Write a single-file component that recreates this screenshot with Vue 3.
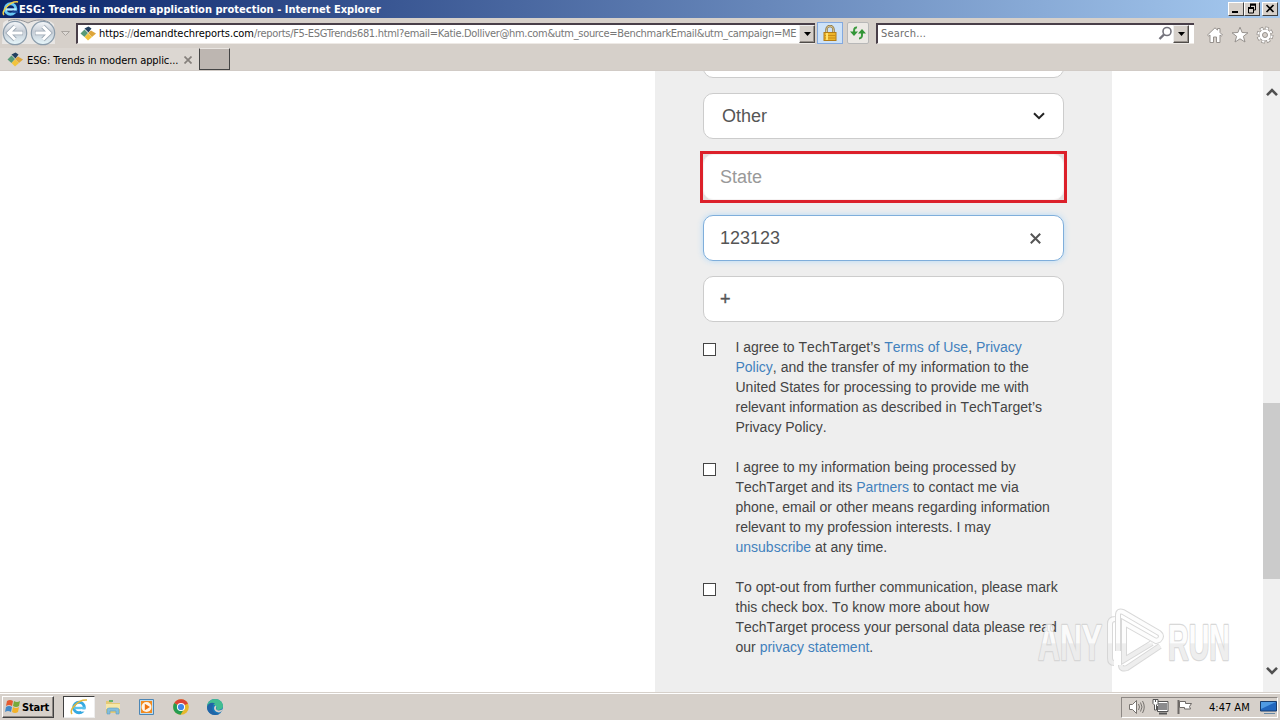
<script setup>
import { ref } from 'vue';

const country = ref('Other');
const zip = ref('123123');
const phone = ref('+');
const pageTitle = 'ESG: Trends in modern application';
</script>

<template>
    <div class="desktop">
        <header class="title-bar">
            <svg class="title-icon" width="17" height="17" viewBox="0 0 18 18">
                <circle cx="9" cy="9.5" r="5.6" fill="none" stroke="#67c8f5" stroke-width="3.2" />
                <path d="M4 10h11" stroke="#b9ecff" stroke-width="2.4" />
                <path d="M11 12.4h6" stroke="#1d4594" stroke-width="2.4" />
                <path d="M2 16C-1 12 8 1 17 2" fill="none" stroke="#f3cf45" stroke-width="1.6" />
            </svg>
            <span class="title-text">{{ pageTitle }} protection - Internet Explorer</span>
            <div class="window-buttons">
                <button class="win-btn">
                    <svg width="14" height="12"><path d="M3 9h6" stroke="#000" stroke-width="2" /></svg>
                </button>
                <button class="win-btn">
                    <svg width="14" height="12" fill="none" stroke="#000">
                        <path d="M5 2h6M5.500 2v2M10.500 2v5H9M3 5.500h6M3.500 5v5h5V5" /><path d="M5 1.500h6M3 5h6" stroke-width="2" />
                    </svg>
                </button>
                <button class="win-btn win-btn--close">
                    <svg width="14" height="12"><path d="M3.500 2l7 7M10.500 2l-7 7" stroke="#000" stroke-width="1.700" /></svg>
                </button>
            </div>
        </header>

        <div class="nav-bar">
            <svg class="history" width="74" height="30" viewBox="0 0 74 30">
                <defs>
                    <linearGradient id="orb" x1="0" y1="0" x2="0" y2="1">
                        <stop offset="0" stop-color="#f7f9fb" />
                        <stop offset=".45" stop-color="#c5ccd5" />
                        <stop offset="1" stop-color="#e8f8fc" />
                    </linearGradient>
                </defs>
                <path d="M3 5C7 0 20 1 28 5c7-4 20-5 26 1l1 20H2z" fill="#e9e7e5" />
                <path d="M8 3c6-3 14-1 20 2 7-4 17-4 22 0" fill="none" stroke="#96979b" />
                <circle cx="15" cy="15" r="11.700" fill="url(#orb)" stroke="#8b9cab" stroke-width="1.200" />
                <circle cx="43" cy="15" r="11.700" fill="url(#orb)" stroke="#8b9cab" stroke-width="1.200" />
                <g fill="none" stroke="#9da9b5" stroke-width="4.600">
                    <path d="M23 15H9M15 8.500L8.500 15l6.500 6.500M35 15h14M43 8.500l6.500 6.500-6.500 6.500" />
                </g>
                <g fill="none" stroke="#fff" stroke-width="3">
                    <path d="M22.500 15H9M15 8.500L8.500 15l6.500 6.500M35.500 15h13.500M43 8.500l6.500 6.500-6.500 6.500" />
                </g>
                <path d="M61.500 13.500h8l-4 4z" fill="#dedad6" stroke="#aaa5a0" />
            </svg>
            <div class="address">
                <svg class="favicon" width="16" height="16" viewBox="0 0 16 16">
                    <path d="M4.500 2.500l4-2 3 2-3 4z" fill="#23405f" /><path d="M4.500 3.500L8 7l-3.500 4L.5 7.500z" fill="#579a78" />
                    <path d="M11 4.500l5 3-4 3.500L8 7z" fill="#dda53b" /><path d="M8 7.500l4 3.500-4 3.500L4.500 11z" fill="#f1c43c" />
                </svg>
                <span class="url"><b>https</b>://<b>demandtechreports.com</b>/reports/F5-ESGTrends681.html?email=Katie.Dolliver@hm.com&amp;utm_source=BenchmarkEmail&amp;utm_campaign=ME</span>
                <button class="drop-btn"><svg width="7" height="4"><path d="M0 0h7L3.500 4z" /></svg></button>
            </div>
            <button class="lock-btn">
                <svg width="14" height="17" viewBox="0 0 14 17">
                    <path d="M3.500 8V4.500a3.500 3.500 0 0 1 7 0V8" fill="none" stroke="#8b7340" stroke-width="2.400" />
                    <path d="M3.500 8V4.500a3.500 3.500 0 0 1 7 0V8" fill="none" stroke="#e0cf9a" stroke-width=".9" />
                    <rect x="1" y="7.500" width="12" height="8" fill="#edb52b" stroke="#b27c17" />
                    <path d="M1.500 10.500h11M1.500 13h11" stroke="#ca8d17" />
                    <path d="M4 8v7" stroke="#ffe16d" stroke-width="2" />
                </svg>
            </button>
            <button class="refresh-btn">
                <svg width="16" height="16" viewBox="0 0 16 16">
                    <path d="M7 2.500C4 2 4 5 4 8M9 13.500c3.500 0 3-3 3-6" fill="none" stroke="#3b9a3e" stroke-width="2" />
                    <path d="M0 6.500h8L4 11zM8 8.500h8L12 4z" fill="#329537" />
                </svg>
            </button>
            <div class="search">
                <span class="search-text">Search...</span>
                <svg width="15" height="15" viewBox="0 0 15 15" fill="none" stroke="#74737c">
                    <circle cx="9" cy="5.500" r="4" stroke-width="1.600" /><path d="M6 8.500L1.500 13" stroke-width="2.400" />
                </svg>
                <button class="drop-btn"><svg width="7" height="4"><path d="M0 0h7L3.500 4z" /></svg></button>
            </div>
            <div class="tools">
                <svg width="18" height="18" viewBox="0 0 18 18" fill="#fff" stroke="#96918d">
                    <path d="M1.500 9L9 1.800l2.500 2.300V2.500h2.500v4L16.500 9l-1.200 1-1.300-1v7.500h-3.500V11h-3v5.500H4V9l-1.300 1z" />
                </svg>
                <svg width="18" height="18" viewBox="0 0 18 18" fill="#fff" stroke="#96918d">
                    <path d="M9 1.200l2.100 5.300 5.900.3-4.600 3.500 1.600 5.700L9 12.800 4 16l1.600-5.700L1 6.800l5.900-.3z" />
                </svg>
                <svg width="18" height="18" viewBox="0 0 18 18">
                    <circle cx="9" cy="9" r="6.700" fill="none" stroke="#96918d" stroke-width="3.600" stroke-dasharray="3.400 1.860" />
                    <circle cx="9" cy="9" r="6" fill="#fff" stroke="#96918d" />
                    <circle cx="9" cy="9" r="6.700" fill="none" stroke="#fff" stroke-width="2" stroke-dasharray="2.400 2.860" stroke-dashoffset="-.5" />
                    <circle cx="9" cy="9" r="2.500" fill="#d6d0ca" stroke="#96918d" />
                </svg>
            </div>
        </div>

        <div class="tab-bar">
            <div class="tab">
                <svg class="favicon" width="16" height="16" viewBox="0 0 16 16">
                    <path d="M4.500 2.500l4-2 3 2-3 4z" fill="#23405f" /><path d="M4.500 3.500L8 7l-3.500 4L.5 7.500z" fill="#579a78" />
                    <path d="M11 4.500l5 3-4 3.500L8 7z" fill="#dda53b" /><path d="M8 7.500l4 3.500-4 3.500L4.500 11z" fill="#f1c43c" />
                </svg>
                <span class="tab-text">ESG: Trends in modern applic...</span>
                <svg class="tab-close" width="8" height="8"><path d="M.5.5l7 7M7.500.5l-7 7" stroke="#85807c" stroke-width="1.700" /></svg>
            </div>
            <button class="new-tab"></button>
        </div>

        <main class="page">
            <section class="form-panel">
                <div class="fields">
                    <div class="field"></div>
                    <div class="field field--select">
                        <span>{{ country }}</span>
                        <svg width="12" height="8" viewBox="0 0 12 8"><path d="M1 1.200l5 5 5-5" fill="none" stroke="#222" stroke-width="2" /></svg>
                    </div>
                    <div class="error-frame">
                        <div class="field field--error"><span class="placeholder">State</span></div>
                    </div>
                    <div class="field field--focus">
                        <span>{{ zip }}</span>
                        <svg width="11" height="11" viewBox="0 0 11 11"><path d="M.8.8l9.400 9.400M10.200.8L.8 10.200" stroke="#555" stroke-width="2" /></svg>
                    </div>
                    <div class="field"><span class="plus">{{ phone }}</span></div>
                </div>
                <div class="consents">
                    <div class="consent">
                        <i class="box"></i>
                        <p>I agree to TechTarget’s <a>Terms of Use</a>, <a>Privacy<br>Policy</a>, and the transfer of my information to the<br>United States for processing to provide me with<br>relevant information as described in TechTarget’s<br>Privacy Policy.</p>
                    </div>
                    <div class="consent">
                        <i class="box"></i>
                        <p>I agree to my information being processed by<br>TechTarget and its <a>Partners</a> to contact me via<br>phone, email or other means regarding information<br>relevant to my profession interests. I may<br><a>unsubscribe</a> at any time.</p>
                    </div>
                    <div class="consent">
                        <i class="box"></i>
                        <p>To opt-out from further communication, please mark<br>this check box. To know more about how<br>TechTarget process your personal data please read<br>our <a>privacy statement</a>.</p>
                    </div>
                </div>
            </section>
            <div class="scrollbar">
                <svg width="12" height="9" viewBox="0 0 12 9"><path d="M1 7.200l5-5 5 5" fill="none" stroke="#505050" stroke-width="2.600" /></svg>
                <div class="track"><div class="thumb"></div></div>
                <svg width="12" height="9" viewBox="0 0 12 9"><path d="M1 1.800l5 5 5-5" fill="none" stroke="#505050" stroke-width="2.600" /></svg>
            </div>
            <svg class="watermark" width="216" height="80" viewBox="0 0 216 80">
                <defs>
                    <linearGradient id="mark" x1="0" y1="0" x2="0" y2="76" gradientUnits="userSpaceOnUse">
                        <stop offset=".5" stop-color="#fdfdfd" />
                        <stop offset=".51" stop-color="#ececec" />
                    </linearGradient>
                </defs>
                <text x="7" y="55" textLength="64" lengthAdjust="spacingAndGlyphs">ANY</text>
                <text x="137" y="55" textLength="62" lengthAdjust="spacingAndGlyphs">RUN</text>
                <g class="mark-shadow">
                    <path d="M84 14q-5 0-5 5v34q0 5 4 5M87 46V10q0-5 5-3l36 21q4 3 0 7l-3 1L93 18v37l28-17M90 60q0 5 6 3l33-22" />
                </g>
                <g class="mark-line">
                    <path d="M84 14q-5 0-5 5v34q0 5 4 5M87 46V10q0-5 5-3l36 21q4 3 0 7l-3 1L93 18v37l28-17M90 60q0 5 6 3l33-22" />
                </g>
            </svg>
        </main>

        <footer class="taskbar">
            <button class="start-btn">
                <svg width="18" height="18" viewBox="0 0 18 18">
                    <path d="M3 3q3-2 6 0L8 8Q5 6 2 8z" fill="#e55b30" /><path d="M10 3q3 2 6 0l-1 5q-3 2-6 0z" fill="#77aa3b" />
                    <path d="M2 9q3-2 6 0l-1 5q-3-2-6 0z" fill="#4389c8" /><path d="M9 9q3 2 6 0l-1 5q-3 2-6 0z" fill="#f3b229" />
                </svg>
                <span>Start</span>
            </button>
            <div class="task task--active">
                <svg width="18" height="18" viewBox="0 0 18 18">
                    <circle cx="9" cy="9.500" r="5.300" fill="none" stroke="#35a9e1" stroke-width="3" />
                    <path d="M4 10h11" stroke="#5bc3ed" stroke-width="2.400" /><path d="M11 12.500h6" stroke="#fff" stroke-width="2.200" />
                    <path d="M2 16C-1 12 8 1 17 2" fill="none" stroke="#e4b83c" stroke-width="1.500" />
                </svg>
            </div>
            <div class="task">
                <svg width="18" height="18" viewBox="0 0 18 18">
                    <path d="M2 3h5l1 2h8v10H2z" fill="#e4c975" /><path d="M5 2h4v2H5z" fill="#65b46b" />
                    <path d="M2 6h14v5H2z" fill="#f6e7a7" /><path d="M3 16v-4q0-2 2-2h8q2 0 2 2v4h-3v-3H6v3z" fill="#84bedc" stroke="#5d9fc4" stroke-width=".6" />
                </svg>
            </div>
            <div class="task">
                <svg width="18" height="18" viewBox="0 0 18 18">
                    <path d="M1.500 1.500h14v15h-14z" fill="#bcdcf0" stroke="#4c86b5" /><path d="M3 3h11v12H3z" fill="#f28b20" />
                    <circle cx="8.500" cy="9" r="5" fill="#fff4e6" /><path d="M6.800 5.800L12 9l-5.200 3.200z" fill="#ed7412" />
                </svg>
            </div>
            <div class="task">
                <svg width="18" height="18" viewBox="0 0 18 18">
                    <circle cx="9" cy="9" r="7.800" fill="#e6b82c" /><path d="M9 9L2.200 5.100A7.800 7.800 0 0 1 16 5.500z" fill="#dc4336" />
                    <path d="M9 9L2.200 5.100A7.800 7.800 0 0 0 8.500 16.800L12 11z" fill="#259c51" />
                    <circle cx="9" cy="9" r="4.100" fill="#fff" /><circle cx="9" cy="9" r="3.100" fill="#4086e8" />
                </svg>
            </div>
            <div class="task">
                <svg width="18" height="18" viewBox="0 0 18 18">
                    <circle cx="9" cy="9" r="8" fill="#1777ba" />
                    <path d="M1 9C1 4 5 1 9 1c5 0 8 3.500 8 7 0 3-3 4-5 4-3 0-1-1.500-1.500-3C9.500 6 4 5.500 1 9z" fill="#42bd91" />
                    <path d="M1 9C2 4 7 4 9 5.500 6 7 5 11 8 14c2 2 5 2 7 1-5 4-14 2-14-6z" fill="#2164a6" />
                    <path d="M9.500 7.500c2 1-1 3 1.500 4.500 2 1 4 .5 6-1-1 3-4 4-6 3-3-1-4-5-1.500-6.500z" fill="#d6d0ca" />
                </svg>
            </div>
            <div class="tray">
                <svg width="17" height="16" viewBox="0 0 17 16">
                    <path d="M1.500 5.500h3l4-4v13l-4-4h-3z" fill="#fff" stroke="#77736f" />
                    <path d="M10.500 5q2 3 0 6M12.500 3.500q3 4.500 0 9M14.500 2q3.500 6 0 12" fill="none" stroke="#77736f" />
                </svg>
                <svg width="17" height="16" viewBox="0 0 17 16">
                    <path d="M5.500 3.500h10v8h-10z" fill="#8b8b8d" stroke="#fff" /><path d="M5 2.500h11v10H5.500V7" fill="none" stroke="#555" />
                    <path d="M7 14.500h8" stroke="#555" stroke-width="2" /><path d="M1 .5h5v4L4.500 6v5h-2V6L1 4.500z" fill="#fff" stroke="#555" /><path d="M3.500 0v3" stroke="#555" />
                </svg>
                <svg width="17" height="16" viewBox="0 0 17 16">
                    <path d="M2.500 15V1" stroke="#6d6966" stroke-width="2" /><path d="M3.500 2.500h6v2h6l-2 3 1 2.500h-6V8.500h-5z" fill="#fff" stroke="#6d6966" />
                </svg>
                <span class="clock">4:47 AM</span>
                <svg width="17" height="15" viewBox="0 0 17 15">
                    <path d="M.5 1.500h16v9.500H.5z" fill="#2166be" stroke="#183c6c" /><path d="M1 2h15L1 9z" fill="#4f9ae3" /><path d="M4 13.500h11" stroke="#6687a3" />
                </svg>
            </div>
        </footer>
    </div>
</template>

<style>
html,
body {
    margin: 0;
    overflow: hidden;
}
</style>

<style scoped>
.desktop {
    width: 1280px;
    height: 720px;
    display: flex;
    flex-direction: column;
    overflow: hidden;
    background: #d6d0ca;
    font-family: "DejaVu Sans Condensed", "DejaVu Sans", sans-serif;
    font-size: 11px;
}

.desktop * {
    box-sizing: border-box;
}

svg {
    display: block;
    flex-shrink: 0;
}

button {
    padding: 0;
    font: inherit;
}

.title-bar {
    height: 18px;
    flex-shrink: 0;
    display: flex;
    align-items: center;
    background: linear-gradient(90deg, #0a246a, #a6caf0);
    color: #fff;
}

.title-icon {
    margin: 0 0 1px 2px;
}

.title-text {
    width: 370px;
    font-weight: 700;
    letter-spacing: 0.02px;
    white-space: nowrap;
}

.window-buttons {
    display: flex;
    margin-left: auto;
    padding-right: 2px;
}

.win-btn {
    width: 16px;
    height: 14px;
    display: flex;
    background: #d6d0ca;
    border: 1px solid;
    border-color: #fff #404040 #404040 #fff;
}

.win-btn--close {
    margin-left: 2px;
}

.nav-bar {
    height: 30px;
    flex-shrink: 0;
    display: flex;
    align-items: center;
}

.address,
.search {
    height: 21px;
    display: flex;
    align-items: center;
    background: #fff;
    border-top: 2px solid #493f49;
    border-left: 2px solid #493f49;
    border-bottom: 1px solid #eeeae6;
}

.address {
    width: 739px;
    margin-left: 2px;
}

.favicon {
    margin-left: 2px;
}

.url {
    width: 700px;
    margin-left: 3px;
    white-space: nowrap;
    color: #777;
    letter-spacing: -0.31px;
}

.url b {
    color: #000;
    font-weight: 400;
    letter-spacing: -0.06px;
}

.drop-btn {
    width: 16px;
    height: 18px;
    flex-shrink: 0;
    display: flex;
    align-items: center;
    justify-content: center;
    background: #d6d0ca;
    border: 1px solid;
    border-color: #eee #504c49 #504c49 #eee;
    box-shadow: inset -1px -1px #98928d;
}

.lock-btn,
.refresh-btn {
    height: 22px;
    display: flex;
    align-items: center;
    justify-content: center;
}

.lock-btn {
    width: 26px;
    margin-left: 2px;
    background: #cde2f8;
    border: 1px solid #83a9df;
}

.refresh-btn {
    width: 22px;
    margin-left: 4px;
    background: #ece9e5;
    border: 1px solid #b8b8b8;
    border-radius: 2px;
}

.search {
    width: 318px;
    margin-left: 7px;
    padding-right: 5px;
}

.search-text {
    margin: 0 auto 0 3px;
    color: #6d6d6d;
    letter-spacing: 0.2px;
}

.tools {
    display: flex;
    gap: 7px;
    margin: 4px 0 0 12px;
}

.tab-bar {
    height: 23px;
    flex-shrink: 0;
    display: flex;
    border-bottom: 1px solid #d1cbc6;
}

.tab {
    width: 199px;
    display: flex;
    align-items: center;
    padding: 2px 0 0 5px;
    background: #dcd7d2;
}

.tab-text {
    width: 154px;
    margin-left: 4px;
    white-space: nowrap;
    letter-spacing: -0.1px;
}

.tab-close {
    margin-left: 3px;
}

.new-tab {
    width: 31px;
    height: 22px;
    background: #bdb6b1;
    border: 1px solid #444;
    border-top-color: #e9e5e1;
}

.page {
    position: relative;
    height: 621px;
    flex-shrink: 0;
    display: flex;
    justify-content: flex-end;
    overflow: hidden;
    background: #fff;
    font-family: "Liberation Sans", Arial, sans-serif;
    font-kerning: none;
}

.form-panel {
    width: 457px;
    margin-right: 151px;
    padding-left: 48px;
    background: #eee;
}

.fields {
    width: 361px;
    display: flex;
    flex-direction: column;
    gap: 15px;
    margin-top: -39px;
}

.field {
    height: 46px;
    display: flex;
    align-items: center;
    justify-content: space-between;
    padding: 0 22px 0 16px;
    background: #fff;
    border: 1px solid #ccc;
    border-radius: 10px;
    color: #555;
    font-size: 18px;
}

.field--select {
    padding: 0 18px;
}

.error-frame {
    height: 46px;
    background: #e4e0e0;
    outline: 3px solid #dc202a;
}

.field--error {
    border-color: #f5f2f2;
}

.field--focus {
    border-color: #7faedb;
    box-shadow: 0 0 6px #b4daf8;
}

.placeholder {
    color: #999;
}

.plus {
    -webkit-text-stroke: 0.4px #555;
}

.consents {
    display: flex;
    flex-direction: column;
    gap: 20px;
    margin-top: 15px;
}

.consent {
    display: flex;
    gap: 19.5px;
}

.consent p {
    margin: 0;
    white-space: nowrap;
    color: #444;
    font-size: 14px;
    line-height: 20px;
}

.consent a {
    color: #4281bd;
}

.box {
    width: 13px;
    height: 13px;
    margin-top: 6px;
    background: #fff;
    border: 1px solid #444;
}

.scrollbar {
    width: 17px;
    display: flex;
    flex-direction: column;
    align-items: center;
    padding: 17px 0 17px;
    background: #f0f0f0;
}

.track {
    width: 17px;
    flex: 1;
    padding-top: 306px;
}

.thumb {
    height: 176px;
    background: #cbcbcb;
}

.watermark {
    position: absolute;
    left: 1031px;
    top: 534px;
    overflow: visible;
    opacity: 0.85;
}

.watermark text {
    fill: url(#mark);
    stroke: #d2d2d2;
    stroke-width: 2.5px;
    stroke-linejoin: round;
    paint-order: stroke;
    font: 700 50px "Liberation Sans Narrow", "Liberation Sans", sans-serif;
}

.mark-line,
.mark-shadow {
    fill: none;
    stroke: url(#mark);
    stroke-width: 4px;
}

.mark-shadow {
    stroke: #d2d2d2;
    stroke-width: 6px;
}

.taskbar {
    height: 28px;
    flex-shrink: 0;
    display: flex;
    align-items: center;
    padding: 1px 2px 0;
    border-top: 1px solid #d6d0ca;
    box-shadow: inset 0 1px #fff;
}

.start-btn {
    width: 52px;
    height: 22px;
    display: flex;
    align-items: center;
    margin-right: 9px;
    background: #d6d0ca;
    border: 1px solid;
    border-color: #fff #404040 #404040 #fff;
    box-shadow: inset -1px -1px #8d8884;
    font-weight: 700;
    letter-spacing: -0.2px;
}

.start-btn svg {
    margin-left: 1px;
}

.task {
    width: 34px;
    height: 22px;
    display: flex;
    align-items: center;
    justify-content: center;
}

.task--active {
    width: 32px;
    margin-right: 1px;
    background: #fff;
    border: 1px solid;
    border-color: #404040 #eee #eee #404040;
}

.tray {
    width: 157px;
    height: 21px;
    display: flex;
    align-items: center;
    gap: 7px;
    margin-left: auto;
    padding-left: 6px;
    border: 1px solid;
    border-color: #8d8884 #fff #fff #8d8884;
}

.clock {
    width: 42px;
    margin: 0 3px 0 9px;
    white-space: nowrap;
}
</style>
